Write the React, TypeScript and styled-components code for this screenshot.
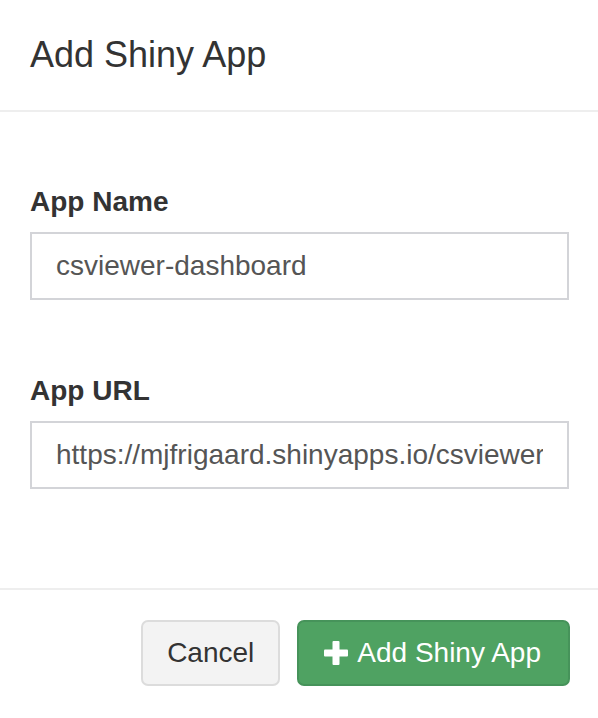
import React from "react";
import styled, { createGlobalStyle } from "styled-components";

const GlobalStyle = createGlobalStyle`
  html, body { margin: 0; padding: 0; background: #ffffff; }
  body { font-family: "Liberation Sans", Arial, Helvetica, sans-serif; color: #333333; }
  * { box-sizing: border-box; }
`;

const Modal = styled.div`
  width: 598px;
  height: 718px;
  display: flex;
  flex-direction: column;
  background: #ffffff;
`;

const Header = styled.div`
  height: 112px;
  padding: 30px 30px;
  border-bottom: 2px solid #eeeeee;
`;

const Title = styled.h4`
  margin: 0;
  font-size: 36px;
  line-height: 50px;
  font-weight: 400;
  color: #333333;
`;

const Body = styled.div`
  flex: 1;
  padding: 70px 29px 0 30px;
  display: flex;
  flex-direction: column;
  gap: 71px;
`;

const Group = styled.div`
  display: flex;
  flex-direction: column;
`;

const Label = styled.label`
  font-size: 28px;
  line-height: 40px;
  font-weight: 700;
  color: #333333;
  margin-bottom: 10px;
`;

const Input = styled.input`
  height: 68px;
  width: 100%;
  padding: 0 24px;
  border: 2px solid #d3d4d8;
  border-radius: 0;
  font-family: "Liberation Sans", Arial, Helvetica, sans-serif;
  font-size: 28px;
  color: #555555;
  background: #ffffff;
  outline: none;
`;

const Footer = styled.div`
  height: 130px;
  border-top: 2px solid #eeeeee;
  padding: 30px 28px 0 30px;
  display: flex;
  justify-content: flex-end;
  align-items: flex-start;
  gap: 17px;
`;

const Button = styled.button<{ $primary?: boolean }>`
  height: 66px;
  padding: ${(p) => (p.$primary ? "0 27px 0 25px" : "0 24px")};
  display: inline-flex;
  align-items: center;
  gap: 9px;
  font-family: "Liberation Sans", Arial, Helvetica, sans-serif;
  font-size: 28px;
  line-height: 40px;
  border-radius: 7px;
  border: 2px solid ${(p) => (p.$primary ? "#46935a" : "#dcdcdc")};
  background: ${(p) => (p.$primary ? "#4fa262" : "#f3f3f3")};
  color: ${(p) => (p.$primary ? "#ffffff" : "#333333")};
  cursor: pointer;
`;

const PlusIcon = () => (
  <svg width="24" height="24" viewBox="0 0 24 24" aria-hidden="true">
    <rect x="8.5" y="0" width="7" height="24" rx="1" fill="#ffffff" />
    <rect x="0" y="8.5" width="24" height="7" rx="1" fill="#ffffff" />
  </svg>
);

export default function App() {
  return (
    <>
      <GlobalStyle />
      <Modal>
        <Header>
          <Title>Add Shiny App</Title>
        </Header>
        <Body>
          <Group>
            <Label htmlFor="appName">App Name</Label>
            <Input id="appName" defaultValue="csviewer-dashboard" />
          </Group>
          <Group>
            <Label htmlFor="appUrl">App URL</Label>
            <Input id="appUrl" defaultValue="https://mjfrigaard.shinyapps.io/csviewer-dashboard/" />
          </Group>
        </Body>
        <Footer>
          <Button>Cancel</Button>
          <Button $primary>
            <PlusIcon />
            Add Shiny App
          </Button>
        </Footer>
      </Modal>
    </>
  );
}
